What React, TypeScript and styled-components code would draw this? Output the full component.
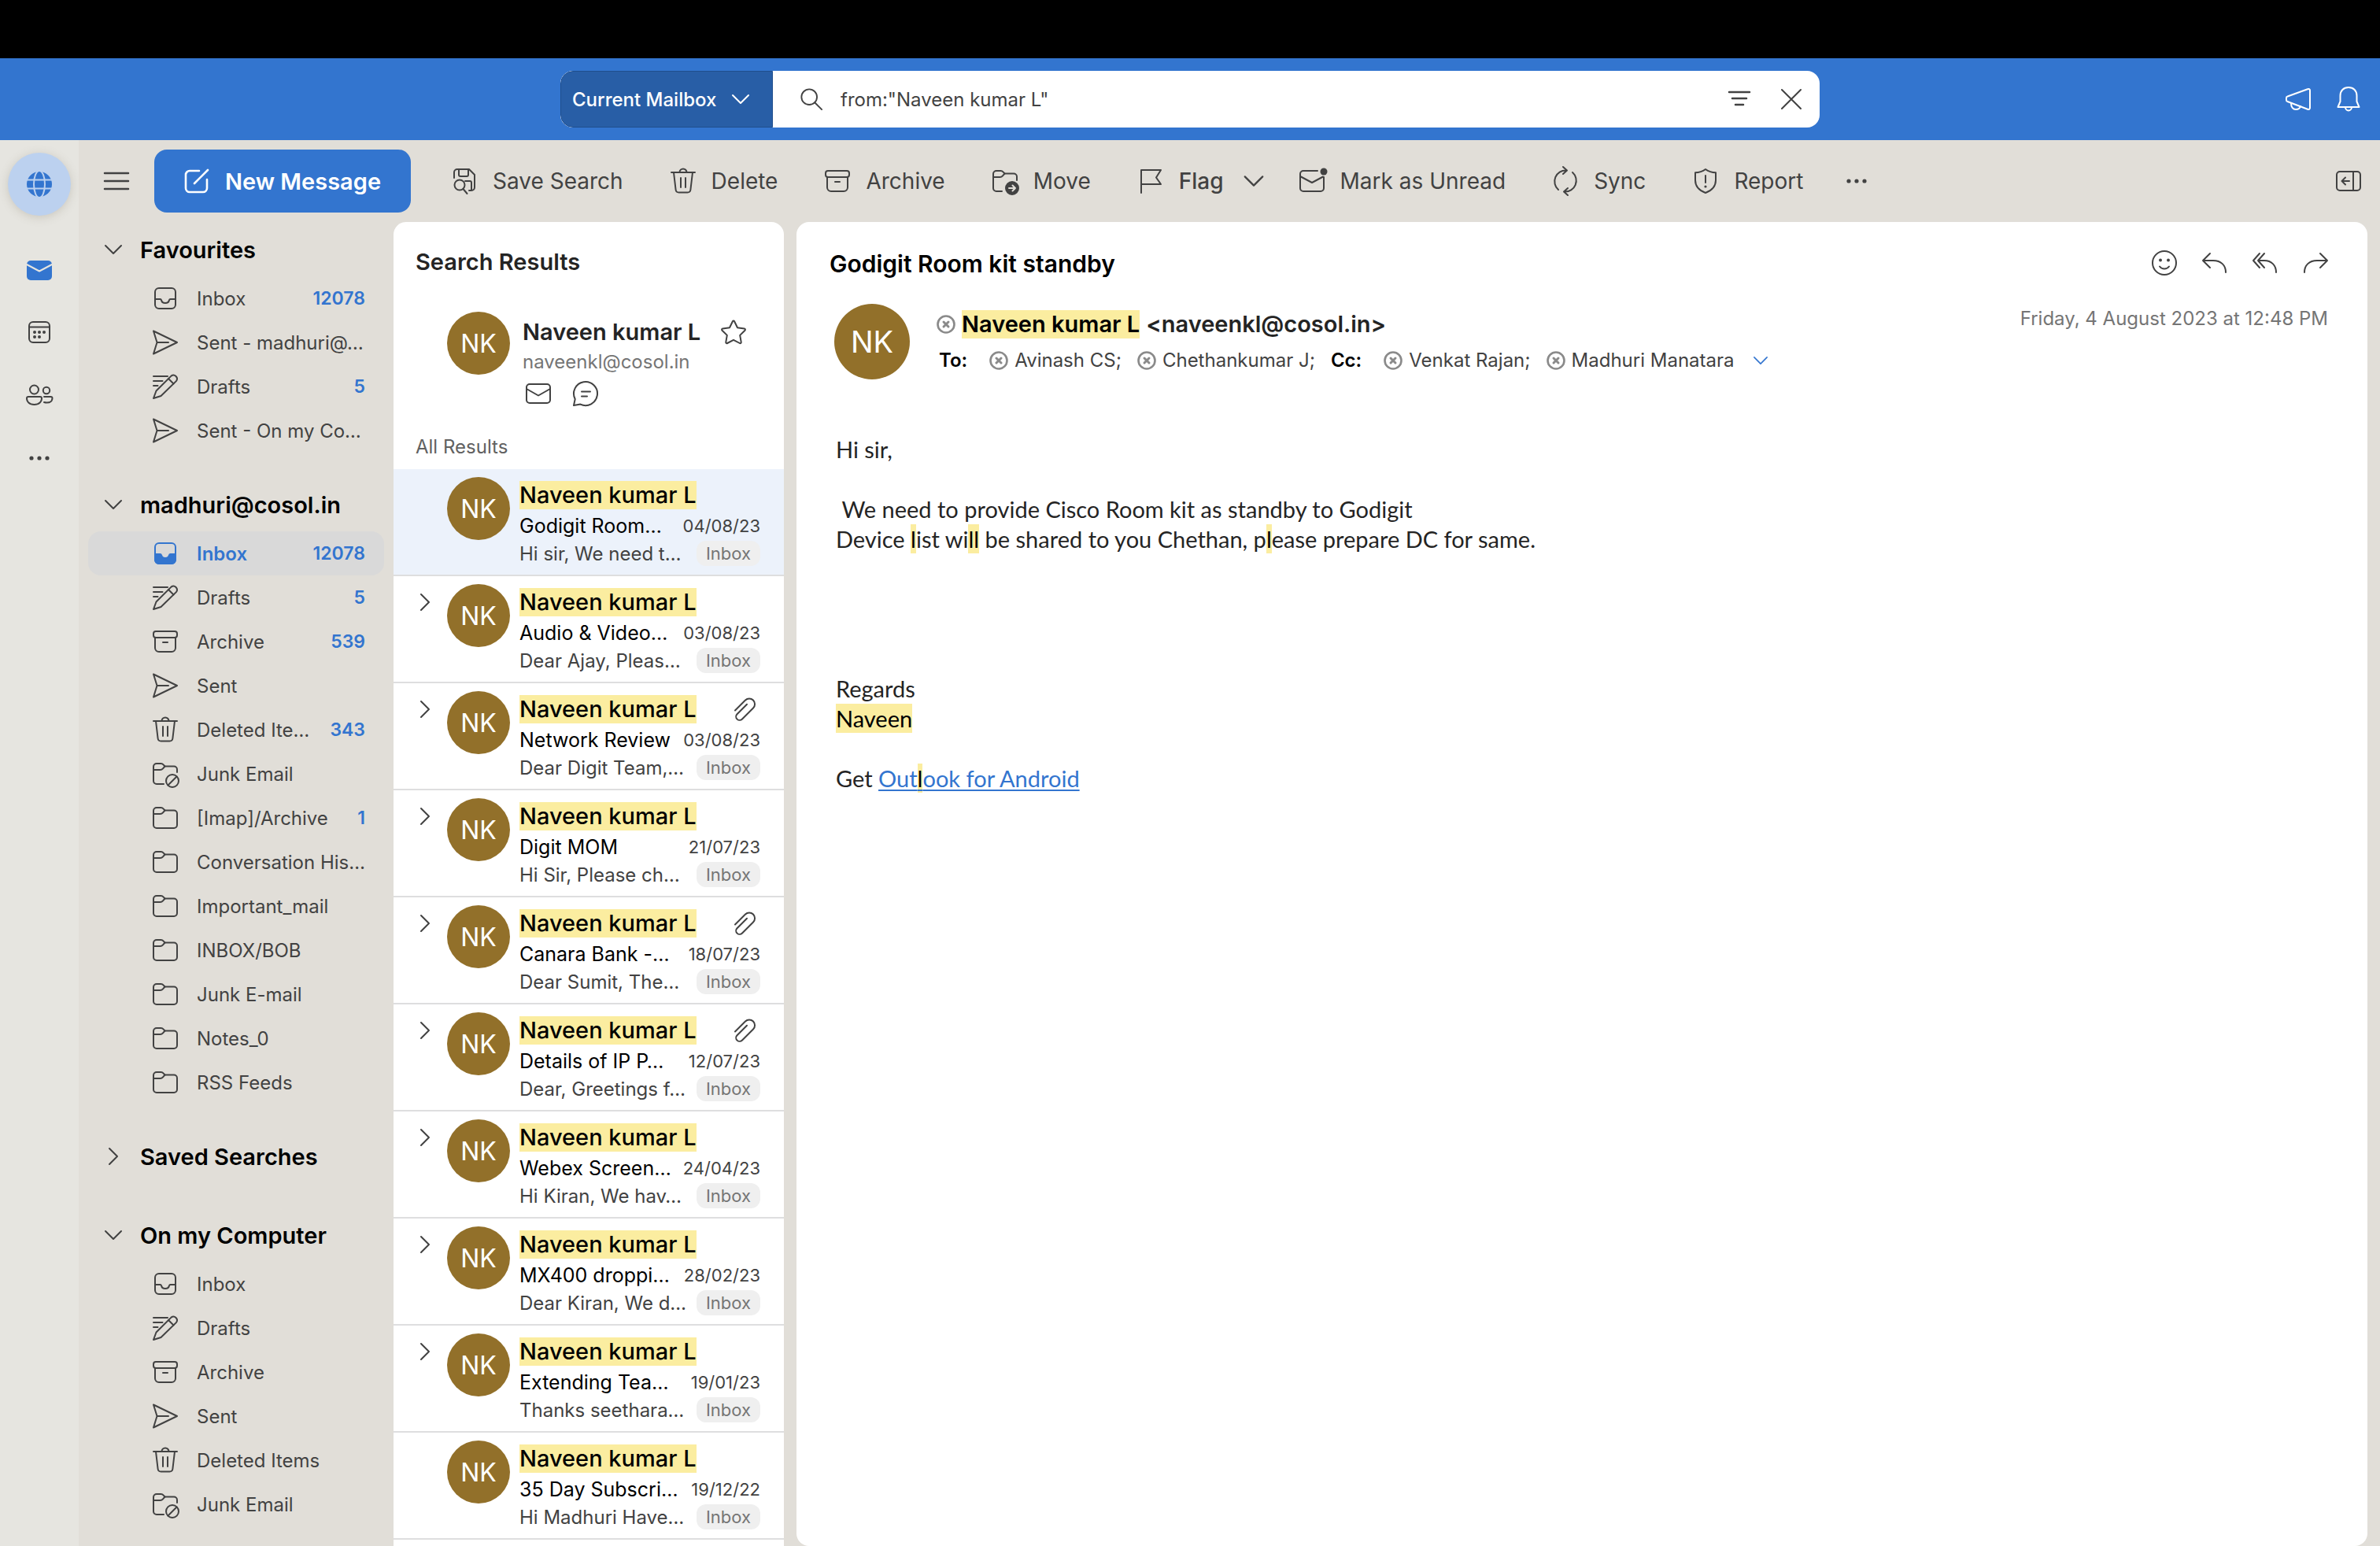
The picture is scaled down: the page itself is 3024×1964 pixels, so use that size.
import React from "react";
import styled, { createGlobalStyle, css } from "styled-components";

const color = {
  blue: "#3375cf",
  blueDark: "#285ea6",
  rail: "#e6e5e0",
  chrome: "#e1ded8",
  ink: "#242424",
  text: "#424242",
  muted: "#757575",
  line: "#dededf",
  highlight: "#fbeda0",
  avatar: "#92702a",
};

const GlobalStyle = createGlobalStyle`
  *, *::before, *::after { box-sizing: border-box; }
  html, body, #root { height: 100%; }
  body {
    margin: 0;
    background: #000;
    color: ${color.text};
    font-family: Inter, Roboto, "Liberation Sans", sans-serif;
    font-size: 24px;
    overflow: hidden;
  }
  button, input, select { font: inherit; color: inherit; }
  ul { list-style: none; margin: 0; padding: 0; }
  h1, h2, h3, p { margin: 0; font-weight: inherit; font-size: inherit; }
`;

/* ---------- icons ---------- */

const Svg = styled.svg<{ $size: number }>`
  display: block;
  flex: none;
  width: ${(p) => p.$size}px;
  height: ${(p) => p.$size}px;
  overflow: visible;
  fill: none;
  stroke: currentColor;
  stroke-width: 2;
  stroke-linecap: round;
  stroke-linejoin: round;
`;

const FOLDER_TAB = "M1 11h8.500c1.600 0 2.600-.6 3.500-1.700l2.500-2.800";

const drawings: Record<string, React.ReactNode> = {
  chevronDown: <path d="M6 11l10 10 10-10" />,
  chevronRight: <path d="M11 6l10 10-10 10" />,
  menu: <path d="M1 6h30M1 16h30M1 26h30" strokeWidth="2.500" />,
  compose: (
    <g strokeWidth="2.600">
      <path d="M19 3H7a5 5 0 0 0-5 5v17a5 5 0 0 0 5 5h17a5 5 0 0 0 5-5V14" />
      <path d="M30 2L13 19" />
    </g>
  ),
  saveSearch: (
    <g>
      <path d="M3 12V5a4 4 0 0 1 4-4h15l7 7v16a4 4 0 0 1-4 4h-3" />
      <path d="M9 1v7a2 2 0 0 0 2 2h8a2 2 0 0 0 2-2V1" />
      <circle cx="10" cy="21" r="6.500" />
      <path d="M14.500 26l5 6M17 16h6a2 2 0 0 1 2 2v9" />
    </g>
  ),
  trash: (
    <g>
      <path d="M1 5h30M11.500 5a4.500 4.500 0 0 1 9 0" />
      <path d="M4 5l2.600 22a4 4 0 0 0 4 3.500h10.800a4 4 0 0 0 4-3.500L28 5" />
      <path d="M13 12v12M19 12v12" />
    </g>
  ),
  archive: (
    <g>
      <rect x="1" y="3" width="30" height="8" rx="3" />
      <path d="M3 11v13a5 5 0 0 0 5 5h16a5 5 0 0 0 5-5V11M13 17h6" />
    </g>
  ),
  move: (
    <g>
      <path d="M12 29H5a4 4 0 0 1-4-4V7a4 4 0 0 1 4-4h5.500c1.400 0 2.300.5 3 1.400L15.500 6.500H27a4 4 0 0 1 4 4V15" />
      <path d={FOLDER_TAB} />
      <circle cx="25" cy="25" r="8" fill="currentColor" />
      <path d="M21 25h8m-3.500-3.500L29 25l-3.500 3.500" stroke={color.chrome} />
    </g>
  ),
  flag: <path d="M4 31V2h25l-6 9.500 6 8.500H4" />,
  unread: (
    <g>
      <path d="M23 3H5a4 4 0 0 0-4 4v18a4 4 0 0 0 4 4h22a4 4 0 0 0 4-4V11" />
      <path d="M1 10l15 8 14-7.500" />
      <circle cx="31" cy="4" r="4.500" fill="currentColor" stroke="none" />
    </g>
  ),
  sync: (
    <g>
      <path d="M7 27A14 14 0 0 1 17 2.500M13-2l5 4.500-5 4.500" />
      <path d="M25 5a14 14 0 0 1-10 24.500M19 25l-5 4.500 5 4.500" />
    </g>
  ),
  shield: (
    <g>
      <path d="M16 1c4 3 8 4.200 13 4.200V15c0 8-5 13-13 16C8 28 3 23 3 15V5.200C8 5.200 12 4 16 1z" />
      <path d="M16 9v9" />
      <circle cx="16" cy="23" r="1.600" fill="currentColor" stroke="none" />
    </g>
  ),
  dots: (
    <g fill="currentColor" stroke="none">
      <circle cx="6" cy="16" r="2.600" />
      <circle cx="16" cy="16" r="2.600" />
      <circle cx="26" cy="16" r="2.600" />
    </g>
  ),
  panel: (
    <g>
      <rect x="1" y="4" width="30" height="24" rx="4" />
      <path d="M22 4v24M17 16H7.500m4.500-4.500L7.500 16l4.500 4.500" />
    </g>
  ),
  search: (
    <g>
      <circle cx="13" cy="13" r="10.500" />
      <path d="M20.500 20.500L30 30" />
    </g>
  ),
  filter: <path d="M3 7h26M7 15h18M11 23h10" strokeWidth="2.500" />,
  close: <path d="M4 4l24 24M28 4L4 28" />,
  megaphone: (
    <g>
      <path d="M2.500 12.500L28 3.200a2 2 0 0 1 3 1.800v22a2 2 0 0 1-3 1.800L2.500 19A2 2 0 0 1 1 17v-2.500a2 2 0 0 1 1.500-2z" />
      <path d="M7 21c0 5 2.500 8 6 8s5.500-2 6-4" />
    </g>
  ),
  bell: (
    <g>
      <path d="M16 1C9.500 1 5.500 5.500 5.500 11.500V19L2.500 26h27l-3-7v-7.500C26.500 5.500 22.500 1 16 1z" />
      <path d="M12 26a4 4.500 0 0 0 8 0" />
    </g>
  ),
  globe: (
    <g stroke="#bcd1ef">
      <circle cx="16" cy="16" r="16" fill={color.blue} stroke="none" />
      <ellipse cx="16" cy="16" rx="7" ry="17" />
      <path d="M0 10.500h32M0 21.500h32" />
    </g>
  ),
  mailFilled: (
    <g stroke="none">
      <rect x="0" y="5" width="32" height="25" rx="5" fill="currentColor" />
      <path d="M0 10l16 8.500L32 10" stroke={color.rail} />
    </g>
  ),
  calendar: (
    <g>
      <rect x="3" y="3" width="26" height="26" rx="5" />
      <path d="M3 9.500h26" />
      <g fill="currentColor" stroke="none">
        <circle cx="10" cy="16" r="2" />
        <circle cx="16" cy="16" r="2" />
        <circle cx="22" cy="16" r="2" />
        <circle cx="10" cy="22" r="2" />
        <circle cx="16" cy="22" r="2" />
      </g>
    </g>
  ),
  people: (
    <g>
      <circle cx="9.500" cy="9" r="5.500" />
      <circle cx="25" cy="10" r="4.200" />
      <path d="M2 18h15a2 2 0 0 1 2 2c0 4-3 8-9.500 8S0 24 0 20a2 2 0 0 1 2-2z" />
      <path d="M22 18h8.500a2 2 0 0 1 2 2c0 3-2.500 5.500-7 5.500-1.500 0-2.500-.2-3.500-.5" />
    </g>
  ),
  inbox: (
    <g>
      <rect x="3" y="3" width="26" height="26" rx="5" />
      <path d="M3 17h6.500c.9 0 1.300.5 1.500 1.200.5 2.300 2.400 3.800 5 3.800s4.500-1.500 5-3.800c.2-.7.6-1.200 1.500-1.200H29" />
    </g>
  ),
  inboxFilled: (
    <g>
      <rect x="3" y="3" width="26" height="26" rx="5" />
      <path
        fill="currentColor"
        d="M3 17h6.500c.9 0 1.300.5 1.500 1.200.5 2.300 2.400 3.800 5 3.800s4.500-1.500 5-3.800c.2-.7.6-1.200 1.500-1.200H29v7a5 5 0 0 1-5 5H8a5 5 0 0 1-5-5z"
      />
    </g>
  ),
  sent: <path d="M1 1.500L31 16 1 30.500 5.500 16zM6 16h14" />,
  drafts: (
    <g>
      <path d="M1 3h18M1 9h11.500M1 15h5.500" />
      <path d="M1 31l3.500-9.500L23.500 2.600a4.600 4.600 0 0 1 6.400 6.500L10.500 28z" />
      <path d="M20 6l6.500 6.500" />
    </g>
  ),
  folder: (
    <g>
      <path d="M1 25V7a4 4 0 0 1 4-4h5.500c1.400 0 2.300.5 3 1.400L15.500 6.500H27a4 4 0 0 1 4 4V25a4 4 0 0 1-4 4H5a4 4 0 0 1-4-4z" />
      <path d={FOLDER_TAB} />
    </g>
  ),
  junk: (
    <g>
      <path d="M14 29H5a4 4 0 0 1-4-4V7a4 4 0 0 1 4-4h5.500c1.400 0 2.300.5 3 1.400L15.500 6.500H27a4 4 0 0 1 4 4V14" />
      <path d={FOLDER_TAB} />
      <circle cx="25" cy="25" r="8" />
      <path d="M19.500 30.500l11-11" />
    </g>
  ),
  star: (
    <path d="M16 1.500c.5 0 .9.300 1.100.7l3.900 8 8.800 1.300c1.100.2 1.500 1.400.7 2.200l-6.300 6.200 1.500 8.700c.2 1.100-.9 1.900-1.800 1.400L16 25.800 8.100 30c-.9.500-2-.3-1.800-1.400l1.500-8.700-6.300-6.200c-.8-.8-.4-2 .7-2.200l8.800-1.300 3.900-8c.2-.4.600-.7 1.100-.7z" />
  ),
  mail: (
    <g>
      <rect x="1" y="4" width="30" height="24" rx="4" />
      <path d="M1 10l15 8.500L31 10" />
    </g>
  ),
  chat: (
    <g>
      <path d="M1 31l1.700-8A15 15 0 1 1 9.500 29.600z" />
      <path d="M11 13.500h11M11 19.500h7" />
    </g>
  ),
  clip: <path d="M4 17.500L17 4.500a7 7 0 0 1 10 10L13 28.500a4.500 4.500 0 0 1-6.500-6.300L19 9.800" />,
  smile: (
    <g>
      <circle cx="16" cy="16" r="15" />
      <path d="M10 20.500a7.500 7.500 0 0 0 12 0" />
      <circle cx="11" cy="12.500" r="2" fill="currentColor" stroke="none" />
      <circle cx="21" cy="12.500" r="2" fill="currentColor" stroke="none" />
    </g>
  ),
  reply: <path d="M10 4L1 13l9 9M1 13h13c10 0 16 6 16 15" />,
  replyAll: <path d="M9 4L1 13l8 9M15 4L7 13l8 9M7 13h8c9 0 15 6 15 15" />,
  forward: <path d="M22 4l9 9-9 9M31 13H18C8 13 2 19 2 28" />,
  presence: (
    <g strokeWidth="3.500">
      <circle cx="16" cy="16" r="14" />
      <path d="M12 12l8 8M20 12l-8 8" strokeWidth="4" />
    </g>
  ),
};

const Icon = ({ name, size = 32 }: { name: string; size?: number }) => (
  <Svg viewBox="0 0 32 32" $size={size} aria-hidden="true">
    {drawings[name]}
  </Svg>
);

/* ---------- shell ---------- */

const Window = styled.div`
  display: flex;
  flex-direction: column;
  height: 100vh;
  padding-top: 74px;
  background: #000;
`;

const bareButton = css`
  display: flex;
  align-items: center;
  padding: 0;
  border: 0;
  background: none;
  text-align: left;
  white-space: nowrap;
`;

const IconButton = styled.button<{ $tone?: string }>`
  ${bareButton}
  flex: none;
  color: ${(p) => p.$tone ?? color.text};
`;

const TitleBar = styled.header`
  display: grid;
  grid-template-columns: 1fr minmax(0, 1600px) 1fr;
  align-items: center;
  flex: none;
  height: 104px;
  background: ${color.blue};
`;

const SearchBox = styled.form`
  grid-column: 2;
  display: flex;
  height: 72px;
  border-radius: 16px;
  overflow: hidden;
  background: #fff;
`;

const Scope = styled.label`
  display: grid;
  flex: none;
  width: 270px;
  align-items: center;
  background: ${color.blueDark};
  border: 1px solid #1f4e8d;
  border-radius: 16px 0 0 16px;
  color: #fff;
  > * { grid-area: 1 / 1; }
  > svg { justify-self: end; margin-right: 24px; pointer-events: none; }
`;

const ScopeSelect = styled.select`
  appearance: none;
  width: 100%;
  height: 100%;
  padding: 0 14px;
  border: 0;
  background: none;
  font-size: 24px;
  font-weight: 500;
`;

const SearchField = styled.div`
  display: flex;
  flex: 1;
  align-items: center;
  gap: 22px;
  padding: 0 20px 0 34px;
`;

const SearchInput = styled.input`
  flex: 1;
  min-width: 0;
  padding: 0;
  border: 0;
  outline: 0;
  background: none;
  font-size: 24px;
`;

const SearchActions = styled.div`
  display: flex;
  gap: 34px;
`;

const TitleActions = styled.div`
  display: flex;
  justify-content: flex-end;
  gap: 32px;
  padding-right: 24px;
`;

const Workspace = styled.div`
  display: grid;
  grid-template-columns: 100px minmax(0, 1fr);
  flex: 1;
  min-height: 0;
`;

const Rail = styled.nav`
  display: flex;
  flex-direction: column;
  align-items: center;
  padding-top: 16px;
  background: ${color.rail};
`;

const Account = styled.button`
  display: grid;
  place-items: center;
  width: 80px;
  height: 80px;
  margin-bottom: 28px;
  padding: 0;
  border: 0;
  border-radius: 50%;
  background: #bcd1ef;
  box-shadow: 0 2px 12px rgba(120, 110, 90, 0.25);
`;

const RailButton = styled.button<{ $active?: boolean }>`
  display: grid;
  place-items: center;
  width: 80px;
  height: 80px;
  padding: 0;
  border: 0;
  background: none;
  color: ${(p) => (p.$active ? color.blue : color.text)};
`;

const Main = styled.div`
  display: flex;
  flex-direction: column;
  min-width: 0;
  min-height: 0;
  background: ${color.chrome};
`;

/* ---------- toolbar ---------- */

const Toolbar = styled.div`
  display: flex;
  align-items: center;
  flex: none;
  height: 104px;
  padding: 0 24px 0 32px;
  font-size: 28px;
`;

const NewMessage = styled.button`
  ${bareButton}
  justify-content: center;
  gap: 20px;
  width: 326px;
  height: 80px;
  margin: 0 52px 0 32px;
  border-radius: 16px;
  background: ${color.blue};
  color: #fff;
  font-size: 29px;
  font-weight: 600;
`;

const Tools = styled.div`
  display: flex;
  flex: 1;
  align-items: center;
  gap: 60px;
`;

const Tool = styled.button<{ $menu?: boolean }>`
  ${bareButton}
  gap: 20px;
  ${(p) => p.$menu && css`
    margin-right: -20px;
    font-weight: 500;
  `}
`;

const Overflow = styled(IconButton)`
  margin-left: -8px;
`;

/* ---------- folders ---------- */

const Columns = styled.div`
  display: grid;
  grid-template-columns: 400px 496px minmax(0, 1fr);
  flex: 1;
  min-height: 0;
`;

const Folders = styled.nav`
  display: flex;
  flex-direction: column;
  gap: 32px;
  padding: 1px 12px 0;
  overflow: hidden;
`;

const GroupHeader = styled.button`
  ${bareButton}
  gap: 18px;
  width: 100%;
  height: 68px;
  padding-left: 16px;
  color: #000;
  font-size: 29px;
  font-weight: 600;
  > svg { color: ${color.text}; }
`;

const FolderRow = styled.button<{ $active?: boolean }>`
  ${bareButton}
  width: 100%;
  height: 56px;
  padding: 0 24px 0 82px;
  border-radius: 16px;
  ${(p) => p.$active && css`
    background: #d9d9d9;
    color: ${color.blue};
    font-weight: 600;
  `}
`;

const FolderName = styled.span`
  flex: 1;
  padding-left: 24px;
`;

const FolderCount = styled.span`
  color: ${color.blue};
  font-size: 23px;
  font-weight: 600;
`;

/* ---------- message list ---------- */

const ListPane = styled.section`
  display: flex;
  flex-direction: column;
  border-radius: 16px 16px 0 0;
  background: #fff;
  overflow: hidden;
`;

const ListTitle = styled.h1`
  padding: 32px 28px 0;
  color: ${color.ink};
  font-size: 29px;
  font-weight: 600;
  line-height: 38px;
`;

const Contact = styled.div`
  display: flex;
  gap: 16px;
  padding: 44px 0 0 68px;
`;

const Avatar = styled.span<{ $large?: boolean }>`
  display: grid;
  place-items: center;
  flex: none;
  width: ${(p) => (p.$large ? 96 : 80)}px;
  height: ${(p) => (p.$large ? 96 : 80)}px;
  border-radius: 50%;
  background: ${color.avatar};
  color: #fff;
  font-size: ${(p) => (p.$large ? 38 : 32)}px;
`;

const ContactInfo = styled.div`
  padding-top: 8px;
`;

const ContactName = styled.div`
  display: flex;
  align-items: center;
  gap: 26px;
  color: ${color.ink};
  font-size: 29px;
  font-weight: 600;
  line-height: 36px;
`;

const ContactMail = styled.div`
  color: ${color.muted};
  line-height: 40px;
`;

const ContactActions = styled.div`
  display: flex;
  gap: 28px;
  padding: 4px 0 0 4px;
`;

const ListCaption = styled.h2`
  padding: 36px 28px 12px;
  color: #616161;
  line-height: 32px;
`;

const Row = styled.li<{ $active?: boolean }>`
  display: grid;
  grid-template-columns: 68px 80px minmax(0, 1fr);
  flex: none;
  height: 136px;
  padding: 10px 30px 0 0;
  border-bottom: 2px solid ${color.line};
  background: ${(p) => (p.$active ? "#ecf2fb" : "#fff")};
`;

const Expander = styled(IconButton)`
  align-self: start;
  padding: 7px 0 0 24px;
`;

const Summary = styled.div`
  display: flex;
  flex-direction: column;
  padding: 5px 0 0 12px;
`;

const Line = styled.div<{ $height: number }>`
  display: flex;
  align-items: center;
  justify-content: space-between;
  height: ${(p) => p.$height}px;
  white-space: nowrap;
`;

const Mark = styled.mark`
  background: ${color.highlight};
  color: #000;
`;

const Sender = styled.div`
  font-size: 29px;
  font-weight: 500;
  line-height: 36px;
  > mark { display: block; }
`;

const ClipSlot = styled.span`
  margin-right: 4px;
  color: ${color.text};
`;

const Subject = styled.span`
  padding-top: 2px;
  color: #000;
  font-size: 25px;
`;

const DateText = styled.span`
  padding-top: 2px;
  font-size: 22px;
`;

const Tag = styled.span`
  padding: 0 12px;
  border-radius: 12px;
  background: #efefef;
  color: ${color.muted};
  font-size: 22px;
  line-height: 32px;
`;

/* ---------- reading pane ---------- */

const Reader = styled.article`
  display: flex;
  flex-direction: column;
  margin: 0 16px;
  padding: 36px 50px 0 42px;
  border-radius: 16px;
  background: #fff;
`;

const ReaderTop = styled.div`
  display: flex;
  justify-content: space-between;
  height: 32px;
`;

const ReaderTitle = styled.h2`
  color: #000;
  font-size: 30px;
  font-weight: 600;
  line-height: 34px;
`;

const ReaderActions = styled.div`
  display: flex;
  gap: 32px;
`;

const Envelope = styled.div`
  display: flex;
  gap: 34px;
  padding: 36px 0 0 6px;
`;

const Addresses = styled.div`
  flex: 1;
  padding-top: 8px;
`;

const From = styled.div`
  display: flex;
  align-items: center;
  gap: 8px;
  color: ${color.ink};
  font-size: 29px;
  font-weight: 600;
  line-height: 36px;
  > svg { color: #8a8a8a; }
`;

const Recipients = styled.div`
  display: flex;
  align-items: center;
  gap: 20px;
  padding: 12px 0 0 3px;
  line-height: 32px;
`;

const FieldName = styled.strong`
  padding-right: 8px;
  color: #000;
  font-weight: 600;
`;

const Person = styled.span`
  display: flex;
  align-items: center;
  gap: 8px;
  > svg { color: #8a8a8a; }
`;

const Sent = styled.time`
  color: ${color.muted};
  line-height: 38px;
`;

const Body = styled.div`
  padding: 70px 8px 0;
  color: ${color.ink};
  font-family: Lato, "Open Sans", sans-serif;
  font-size: 29px;
  line-height: 38px;
  white-space: pre-wrap;
  p { min-height: 38px; }
  mark { padding: 1px 0; }
  a { color: ${color.blue}; text-underline-offset: 3px; }
`;

/* ---------- data ---------- */

type Folder = { icon: string; name: string; count?: number; active?: boolean };

const groups: { title: string; closed?: boolean; folders: Folder[] }[] = [
  {
    title: "Favourites",
    folders: [
      { icon: "inbox", name: "Inbox", count: 12078 },
      { icon: "sent", name: "Sent - madhuri@…" },
      { icon: "drafts", name: "Drafts", count: 5 },
      { icon: "sent", name: "Sent - On my Co…" },
    ],
  },
  {
    title: "madhuri@cosol.in",
    folders: [
      { icon: "inboxFilled", name: "Inbox", count: 12078, active: true },
      { icon: "drafts", name: "Drafts", count: 5 },
      { icon: "archive", name: "Archive", count: 539 },
      { icon: "sent", name: "Sent" },
      { icon: "trash", name: "Deleted Ite…", count: 343 },
      { icon: "junk", name: "Junk Email" },
      { icon: "folder", name: "[Imap]/Archive", count: 1 },
      { icon: "folder", name: "Conversation His…" },
      { icon: "folder", name: "Important_mail" },
      { icon: "folder", name: "INBOX/BOB" },
      { icon: "folder", name: "Junk E-mail" },
      { icon: "folder", name: "Notes_0" },
      { icon: "folder", name: "RSS Feeds" },
    ],
  },
  { title: "Saved Searches", closed: true, folders: [] },
  {
    title: "On my Computer",
    folders: [
      { icon: "inbox", name: "Inbox" },
      { icon: "drafts", name: "Drafts" },
      { icon: "archive", name: "Archive" },
      { icon: "sent", name: "Sent" },
      { icon: "trash", name: "Deleted Items" },
      { icon: "junk", name: "Junk Email" },
    ],
  },
];

type Message = { subject: string; date: string; preview: string; thread?: boolean; clip?: boolean };

const messages: Message[] = [
  { subject: "Godigit Room…", date: "04/08/23", preview: "Hi sir, We need t…" },
  { subject: "Audio & Video…", date: "03/08/23", preview: "Dear Ajay, Pleas…", thread: true },
  { subject: "Network Review", date: "03/08/23", preview: "Dear Digit Team,…", thread: true, clip: true },
  { subject: "Digit MOM", date: "21/07/23", preview: "Hi Sir, Please ch…", thread: true },
  { subject: "Canara Bank -…", date: "18/07/23", preview: "Dear Sumit, The…", thread: true, clip: true },
  { subject: "Details of IP P…", date: "12/07/23", preview: "Dear, Greetings f…", thread: true, clip: true },
  { subject: "Webex Screen…", date: "24/04/23", preview: "Hi Kiran, We hav…", thread: true },
  { subject: "MX400 droppi…", date: "28/02/23", preview: "Dear Kiran, We d…", thread: true },
  { subject: "Extending Tea…", date: "19/01/23", preview: "Thanks seethara…", thread: true },
  { subject: "35 Day Subscri…", date: "19/12/22", preview: "Hi Madhuri Have…" },
];

/* ---------- parts ---------- */

const FolderGroup = ({ title, closed, folders }: (typeof groups)[number]) => (
  <section>
    <GroupHeader aria-expanded={!closed}>
      <Icon name={closed ? "chevronRight" : "chevronDown"} />
      {title}
    </GroupHeader>
    <ul>
      {folders.map((f) => (
        <li key={f.name}>
          <FolderRow $active={f.active}>
            <Icon name={f.icon} />
            <FolderName>{f.name}</FolderName>
            {f.count !== undefined && <FolderCount>{f.count}</FolderCount>}
          </FolderRow>
        </li>
      ))}
    </ul>
  </section>
);

const MessageRow = ({ m, active }: { m: Message; active: boolean }) => (
  <Row $active={active}>
    {m.thread ? (
      <Expander aria-label="Expand conversation">
        <Icon name="chevronRight" />
      </Expander>
    ) : (
      <span />
    )}
    <Avatar>NK</Avatar>
    <Summary>
      <Line $height={36}>
        <Sender>
          <Mark>Naveen kumar L</Mark>
        </Sender>
        {m.clip && (
          <ClipSlot>
            <Icon name="clip" />
          </ClipSlot>
        )}
      </Line>
      <Line $height={40}>
        <Subject>{m.subject}</Subject>
        <DateText>{m.date}</DateText>
      </Line>
      <Line $height={32}>
        <span>{m.preview}</span>
        <Tag>Inbox</Tag>
      </Line>
    </Summary>
  </Row>
);

const Recipient = ({ children }: { children: React.ReactNode }) => (
  <Person>
    <Icon name="presence" size={24} />
    {children}
  </Person>
);

export default function App() {
  return (
    <Window>
      <GlobalStyle />
      <TitleBar>
        <SearchBox role="search" onSubmit={(e) => e.preventDefault()}>
          <Scope>
            <ScopeSelect aria-label="Search scope" defaultValue="Current Mailbox">
              <option>Current Mailbox</option>
            </ScopeSelect>
            <Icon name="chevronDown" />
          </Scope>
          <SearchField>
            <Icon name="search" size={30} />
            <SearchInput aria-label="Search" defaultValue={'from:"Naveen kumar L"'} />
            <SearchActions>
              <IconButton type="button" aria-label="Filters">
                <Icon name="filter" />
              </IconButton>
              <IconButton type="button" aria-label="Clear search">
                <Icon name="close" />
              </IconButton>
            </SearchActions>
          </SearchField>
        </SearchBox>
        <TitleActions>
          <IconButton $tone="#fff" aria-label="What's new">
            <Icon name="megaphone" />
          </IconButton>
          <IconButton $tone="#fff" aria-label="Notifications">
            <Icon name="bell" />
          </IconButton>
        </TitleActions>
      </TitleBar>

      <Workspace>
        <Rail>
          <Account aria-label="All accounts">
            <Icon name="globe" />
          </Account>
          <RailButton $active aria-label="Mail">
            <Icon name="mailFilled" />
          </RailButton>
          <RailButton aria-label="Calendar">
            <Icon name="calendar" />
          </RailButton>
          <RailButton aria-label="People">
            <Icon name="people" />
          </RailButton>
          <RailButton aria-label="More apps">
            <Icon name="dots" />
          </RailButton>
        </Rail>

        <Main>
          <Toolbar>
            <IconButton aria-label="Toggle folder pane">
              <Icon name="menu" />
            </IconButton>
            <NewMessage>
              <Icon name="compose" />
              New Message
            </NewMessage>
            <Tools>
              <Tool><Icon name="saveSearch" />Save Search</Tool>
              <Tool><Icon name="trash" />Delete</Tool>
              <Tool><Icon name="archive" />Archive</Tool>
              <Tool><Icon name="move" />Move</Tool>
              <Tool $menu>
                <Icon name="flag" />
                Flag
                <Icon name="chevronDown" size={36} />
              </Tool>
              <Tool><Icon name="unread" />Mark as Unread</Tool>
              <Tool><Icon name="sync" />Sync</Tool>
              <Tool><Icon name="shield" />Report</Tool>
              <Overflow aria-label="More commands">
                <Icon name="dots" />
              </Overflow>
            </Tools>
            <IconButton aria-label="Show task pane">
              <Icon name="panel" />
            </IconButton>
          </Toolbar>

          <Columns>
            <Folders>
              {groups.map((g) => (
                <FolderGroup key={g.title} {...g} />
              ))}
            </Folders>

            <ListPane>
              <ListTitle>Search Results</ListTitle>
              <Contact>
                <Avatar>NK</Avatar>
                <ContactInfo>
                  <ContactName>
                    Naveen kumar L
                    <IconButton aria-label="Add to favourites">
                      <Icon name="star" />
                    </IconButton>
                  </ContactName>
                  <ContactMail>naveenkl@cosol.in</ContactMail>
                  <ContactActions>
                    <IconButton aria-label="Send mail">
                      <Icon name="mail" />
                    </IconButton>
                    <IconButton aria-label="Chat">
                      <Icon name="chat" />
                    </IconButton>
                  </ContactActions>
                </ContactInfo>
              </Contact>
              <ListCaption>All Results</ListCaption>
              <ul>
                {messages.map((m, i) => (
                  <MessageRow key={m.subject} m={m} active={i === 0} />
                ))}
              </ul>
            </ListPane>

            <Reader>
              <ReaderTop>
                <ReaderTitle>Godigit Room kit standby</ReaderTitle>
                <ReaderActions>
                  <IconButton aria-label="React"><Icon name="smile" /></IconButton>
                  <IconButton aria-label="Reply"><Icon name="reply" /></IconButton>
                  <IconButton aria-label="Reply all"><Icon name="replyAll" /></IconButton>
                  <IconButton aria-label="Forward"><Icon name="forward" /></IconButton>
                </ReaderActions>
              </ReaderTop>
              <Envelope>
                <Avatar $large>NK</Avatar>
                <Addresses>
                  <From>
                    <Icon name="presence" size={24} />
                    <Mark>Naveen kumar L</Mark>
                    <span>&lt;naveenkl@cosol.in&gt;</span>
                  </From>
                  <Recipients>
                    <FieldName>To:</FieldName>
                    <Recipient>Avinash CS;</Recipient>
                    <Recipient>Chethankumar J;</Recipient>
                    <FieldName>Cc:</FieldName>
                    <Recipient>Venkat Rajan;</Recipient>
                    <Recipient>Madhuri Manatara</Recipient>
                    <IconButton $tone={color.blue} aria-label="Show all recipients">
                      <Icon name="chevronDown" size={26} />
                    </IconButton>
                  </Recipients>
                </Addresses>
                <Sent>Friday, 4 August 2023 at 12:48 PM</Sent>
              </Envelope>
              <Body>
                <p>Hi sir,</p>
                <p />
                <p>{" We need to provide Cisco Room kit as standby to Godigit"}</p>
                <p>
                  Device <Mark>l</Mark>ist wi<Mark>ll</Mark> be shared to you Chethan, p<Mark>l</Mark>ease
                  {" prepare DC for same."}
                </p>
                <p />
                <p />
                <p />
                <p />
                <p>Regards</p>
                <p><Mark>Naveen</Mark></p>
                <p />
                <p>
                  Get <a href="#outlook">Out<Mark>l</Mark>ook for Android</a>
                </p>
              </Body>
            </Reader>
          </Columns>
        </Main>
      </Workspace>
    </Window>
  );
}
